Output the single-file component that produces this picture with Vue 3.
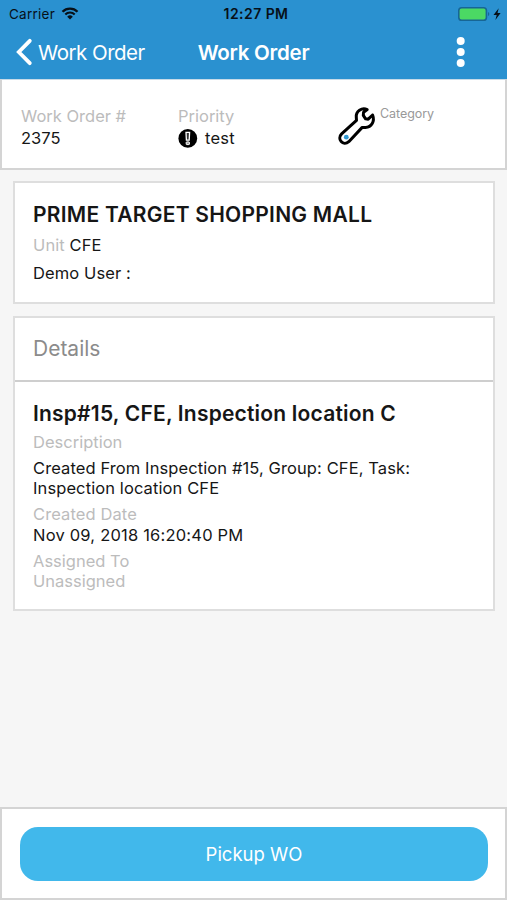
<script setup>
const details = [
  { label: 'Description', value: 'Created From Inspection #15, Group: CFE, Task: Inspection location CFE', kind: 'description' },
  { label: 'Created Date', value: 'Nov 09, 2018 16:20:40 PM', kind: 'created' },
  { label: 'Assigned To', value: 'Unassigned', kind: 'assigned' },
]
</script>

<template>
  <div class="screen">
    <header class="top">
      <div class="status">
        <div class="carrier">
          <span class="carrier-name">Carrier</span>
          <svg class="wifi" viewBox="0 0 18 13" width="18" height="13">
            <path d="M1.5 4.7a10.6 10.6 0 0 1 15 0" fill="none" stroke="#071018" stroke-width="2.3" />
            <path d="M4.3 7.5a6.6 6.6 0 0 1 9.4 0" fill="none" stroke="#071018" stroke-width="2.1" />
            <path d="M6.2 9.7a4 4 0 0 1 5.6 0L9 12.5z" fill="#071018" />
          </svg>
        </div>
        <span class="clock">12:27 PM</span>
        <div class="power">
          <svg viewBox="0 0 46 16" width="46" height="16">
            <rect x="1.8" y="1.8" width="27.6" height="12.4" rx="2.8" fill="#4bd964" stroke="#176695" stroke-width="1.6" />
            <path d="M31 6v4q1.3-.6 1.3-2T31 6z" fill="#176695" />
            <path d="M41.7 2.3 36.5 9h3.2l-1.3 5 5.2-7h-3.1z" fill="#071018" />
          </svg>
        </div>
      </div>
      <nav class="nav">
        <div class="back">
          <svg class="chevron" viewBox="0 0 18 28" width="18" height="28">
            <path d="M14.8 2.8 3.8 14l11 11.2" fill="none" stroke="#fff" stroke-width="3.8" stroke-linecap="round" />
          </svg>
          <span class="back-text">Work Order</span>
        </div>
        <h1 class="title">Work Order</h1>
        <div class="more">
          <svg viewBox="0 0 10 32" width="10" height="32" fill="#fff">
            <circle cx="4.7" cy="5" r="4" />
            <circle cx="4.7" cy="16" r="4" />
            <circle cx="4.7" cy="27" r="4" />
          </svg>
        </div>
      </nav>
    </header>

    <section class="summary">
      <div class="field number">
        <span class="label">Work Order #</span>
        <span class="value">2375</span>
      </div>
      <div class="field priority">
        <span class="label">Priority</span>
        <span class="value flagged">
          <svg viewBox="0 0 20 20" width="20" height="20">
            <circle cx="9.8" cy="9.4" r="9.4" fill="#000" />
            <path d="M8 3.4h3.6l-.4 7.8H8.4z" fill="#333" stroke="#fff" stroke-width="1.3" />
            <rect x="8.2" y="12.9" width="3.2" height="2.7" rx=".5" fill="#999" stroke="#fff" stroke-width="1" />
          </svg>
          <span>test</span>
        </span>
      </div>
      <div class="category">
        <svg class="wrench" viewBox="0 0 40 40" width="40" height="40">
          <path d="M30.2 3.6C24.8 1.2 18.6 5.4 19.3 11.3L19.5 14.4 4.6 27.9C-.4 33 6 40.6 11.8 35.7L25.2 21.4 28.4 21.6C34.6 21.3 38 15.4 35.6 9L31.2 13.2 28.6 12.8 26.3 9.4 26.6 6.2Z" fill="#fff" stroke="#000" stroke-width="3" stroke-linejoin="round" />
          <circle cx="9.3" cy="31.2" r="2.4" fill="#3299d3" />
        </svg>
        <span class="category-text">Category</span>
      </div>
    </section>

    <main class="content">
      <section class="card place">
        <h2 class="place-name">PRIME TARGET SHOPPING MALL</h2>
        <p class="unit"><span class="label">Unit</span> CFE</p>
        <p class="user">Demo User :</p>
      </section>

      <section class="card details">
        <div class="details-head">Details</div>
        <div class="details-body">
          <h2 class="inspection">Insp#15, CFE, Inspection location C</h2>
          <div v-for="d in details" :key="d.label" class="detail" :class="d.kind">
            <div class="label">{{ d.label }}</div>
            <div class="text">{{ d.value }}</div>
          </div>
        </div>
      </section>
    </main>

    <footer class="footer">
      <button class="pickup">Pickup WO</button>
    </footer>
  </div>
</template>

<style>
body {
  margin: 0;
}
</style>

<style scoped>
* {
  box-sizing: border-box;
}
h1, h2, p {
  margin: 0;
}
svg {
  display: block;
  flex: none;
}
.screen {
  width: 507px;
  height: 900px;
  display: flex;
  flex-direction: column;
  background: #f6f6f6;
  font-family: Inter, "Liberation Sans", sans-serif;
  font-size: 16.5px;
  line-height: 21px;
  color: #161616;
  white-space: nowrap;
  overflow: hidden;
}
.top {
  height: 79px;
  flex: none;
  background: #2a91d0;
}
.status {
  height: 27px;
  display: grid;
  grid-template-columns: minmax(0, 1fr) auto minmax(0, 1fr);
  align-items: center;
  padding: 0 4px 0 9px;
  color: #071018;
  font-size: 13.5px;
}
.carrier {
  display: flex;
  align-items: center;
  gap: 6px;
}
.carrier-name {
  letter-spacing: 0.25px;
  padding-top: 1px;
}
.wifi {
  margin-bottom: 1px;
}
.clock {
  font-weight: 600;
  font-size: 14px;
  letter-spacing: 0.45px;
}
.power {
  justify-self: end;
}
.nav {
  height: 50px;
  display: grid;
  grid-template-columns: minmax(0, 1fr) auto minmax(0, 1fr);
  align-items: center;
  color: #fff;
  font-size: 20.5px;
}
.back {
  display: flex;
  align-items: center;
  gap: 5px;
  padding-left: 15px;
}
.back-text {
  letter-spacing: -0.5px;
}
.title {
  font-size: 20.5px;
  font-weight: 600;
  letter-spacing: -0.25px;
}
.more {
  justify-self: end;
  padding-right: 41px;
}
.summary {
  height: 91px;
  flex: none;
  display: flex;
  border: 2px solid #d4d4d4;
  border-top-color: #c7dbe8;
  border-top-width: 1px;
  background: #fff;
  padding: 26px 0 0 19px;
}
.label {
  color: #bcbcbc;
}
.field {
  display: flex;
  flex-direction: column;
  gap: 1px;
}
.number {
  width: 157px;
}
.priority {
  width: 159px;
}
.flagged {
  display: flex;
  align-items: center;
  gap: 7px;
  letter-spacing: 0.2px;
}
.category {
  display: flex;
  align-items: flex-start;
}
.category-text {
  color: #999;
  font-size: 12.5px;
  line-height: 16px;
  padding-left: 3px;
  letter-spacing: -0.05px;
}
.content {
  flex: 1;
  padding: 11px 12px 0 13px;
}
.card {
  border: 2px solid #dedede;
  background: #fff;
}
.place {
  height: 123px;
  padding: 19px 18px 0;
}
.place-name, .inspection {
  font-size: 21px;
  font-weight: 600;
  line-height: 26px;
  letter-spacing: 0.25px;
}
.unit {
  padding-top: 7px;
  letter-spacing: 0.1px;
}
.user {
  padding-top: 7px;
  letter-spacing: 0.1px;
}
.details {
  height: 295px;
  margin-top: 12px;
}
.details-head {
  height: 64px;
  border-bottom: 2px solid #cecece;
  padding: 0 18px;
  font-size: 21px;
  line-height: 62px;
  color: #8b8b8b;
}
.details-body {
  padding: 19px 60px 0 18px;
}
.inspection {
  letter-spacing: 0.2px;
}
.detail {
  line-height: 20.5px;
}
.description {
  padding-top: 5px;
}
.description .text {
  white-space: normal;
  padding-top: 5px;
  letter-spacing: 0.1px;
}
.created, .assigned {
  padding-top: 5.5px;
}
.created .label {
  letter-spacing: 0.1px;
}
.created .text {
  letter-spacing: 0.2px;
}
.assigned .text {
  color: #bcbcbc;
}
.footer {
  height: 93px;
  flex: none;
  border: 2px solid #d4d4d4;
  background: #fff;
  padding: 18px 17px 0 18px;
}
.pickup {
  display: block;
  width: 100%;
  height: 54px;
  border: 0;
  border-radius: 18px;
  background: #41b8eb;
  color: #fff;
  font-family: inherit;
  font-size: 18.5px;
  padding: 0;
}
</style>
